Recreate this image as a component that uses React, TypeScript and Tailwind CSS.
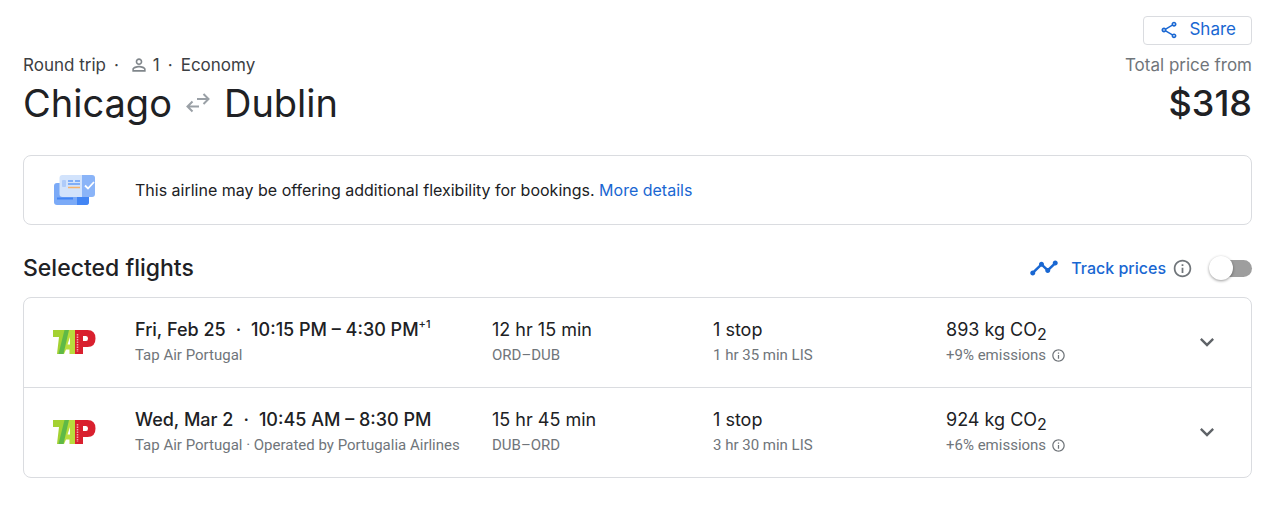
import { useId } from 'react';
import { MdExpandMore, MdInfoOutline, MdOutlineShare, MdPersonOutline, MdTimeline } from 'react-icons/md';

type Flight = {
  date: string;
  times: string;
  dayOffset?: string;
  carrier: string;
  duration: string;
  route: string;
  stops: string;
  layover: string;
  co2: string;
  emissions: string;
};

const flights: Flight[] = [
  {
    date: 'Fri, Feb 25',
    times: '10:15 PM – 4:30 PM',
    dayOffset: '+1',
    carrier: 'Tap Air Portugal',
    duration: '12 hr 15 min',
    route: 'ORD–DUB',
    stops: '1 stop',
    layover: '1 hr 35 min LIS',
    co2: '893',
    emissions: '+9% emissions',
  },
  {
    date: 'Wed, Mar 2',
    times: '10:45 AM – 8:30 PM',
    carrier: 'Tap Air Portugal · Operated by Portugalia Airlines',
    duration: '15 hr 45 min',
    route: 'DUB–ORD',
    stops: '1 stop',
    layover: '3 hr 30 min LIS',
    co2: '924',
    emissions: '+6% emissions',
  },
];

function RoundTripArrows() {
  return (
    <svg width="24" height="20" viewBox="0 0 24 20" fill="none" stroke="#9aa0a6" strokeWidth="2" role="img" aria-label="to and from">
      <path d="M11 6H22.500M17.500 1l5 5-5 5" />
      <path d="M13 13.500H1.500M6.500 8.500l-5 5 5 5" />
    </svg>
  );
}

function TicketsIcon() {
  return (
    <svg width="42" height="32" viewBox="0 0 42 32" aria-hidden="true">
      <rect x="0" y="9" width="35" height="22" rx="3" fill="#7baaf7" />
      <path d="M23 22h12v6a3 3 0 0 1-3 3h-9z" fill="#4285f4" />
      <path d="M3 24.500h16" stroke="#4285f4" strokeWidth="2" />
      <path d="M8.500 1H28v22H8.500a3 3 0 0 1-3-3V4a3 3 0 0 1 3-3z" fill="#d2e3fc" />
      <path d="M28 1h10a3 3 0 0 1 3 3v16a3 3 0 0 1-3 3H28z" fill="#8ab4f8" />
      <rect x="8" y="6" width="4" height="7" rx="1" fill="#aecbfa" />
      <path d="M14 7h5M21 7h5M14 10h12" stroke="#669df6" strokeWidth="1.500" />
      <path d="M14 13.500h12" stroke="#f6b26b" strokeWidth="1.500" />
      <path d="M31 11.500l3 3 6-6.500" fill="none" stroke="#fff" strokeWidth="1.800" />
    </svg>
  );
}

function TapLogo() {
  return (
    <svg width="44" height="26" viewBox="0 0 44 26" role="img" aria-label="TAP Air Portugal">
      <path d="M1 1h15l-5.500 24H5L7 8H1z" fill="#a4d233" />
      <path d="M14 1h9v24h-5.500v-4.500h-3.500L12 25H7z" fill="#b9dc3c" />
      <path d="M12.500 1H17l-5.500 24H6.500z" fill="#5fb946" />
      <path d="M18 8v7.500h-2.500z" fill="#fff" />
      <path d="M23 1h12.500q8 0 8 8.500t-8 8.500H31v7h-8z" fill="#d9202e" />
      <path d="M31 7h3q2 0 2 2.500T34 12h-3z" fill="#fff" />
      <path d="M25.500 5v18" stroke="#f0a9af" strokeWidth="1.500" strokeDasharray="1.500 1" />
    </svg>
  );
}

function FlightRow({ flight }: { flight: Flight }) {
  return (
    <li className="grid grid-cols-[111px_minmax(0,357fr)_minmax(0,221fr)_minmax(0,233fr)_minmax(0,305fr)] border-b border-[#dadce0] pt-[19px] pb-5 last:border-b-0">
      <div className="flex items-center pl-7">
        <TapLogo />
      </div>
      <div className="whitespace-nowrap">
        <div className="text-lg leading-[26px] font-medium">
          {flight.date}
          <span className="mx-2.5">·</span>
          {flight.times}
          {flight.dayOffset && <sup className="-top-2 text-[11px]">{flight.dayOffset}</sup>}
        </div>
        <SubText>{flight.carrier}</SubText>
      </div>
      <div>
        <div className="text-lg leading-[26px]">{flight.duration}</div>
        <SubText>{flight.route}</SubText>
      </div>
      <div>
        <div className="text-lg leading-[26px]">{flight.stops}</div>
        <SubText>{flight.layover}</SubText>
      </div>
      <div className="flex items-center justify-between pr-[30px]">
        <div>
          <div className="text-lg leading-[26px]">
            {flight.co2} kg CO<sub className="text-base">2</sub>
          </div>
          <div className="flex items-center gap-[5px]">
            <SubText>{flight.emissions}</SubText>
            <MdInfoOutline className="size-[15px] text-[#70757a]" aria-hidden="true" />
          </div>
        </div>
        <button type="button" aria-label={`Show details for ${flight.date}`} className="text-[#5f6368]">
          <MdExpandMore className="size-7" />
        </button>
      </div>
    </li>
  );
}

function SubText({ children }: { children: string }) {
  return <div className="font-[Roboto,sans-serif] text-[15px] leading-6 text-[#70757a]">{children}</div>;
}

export default function App() {
  const trackId = useId();
  return (
    <main className="bg-white pt-4 pr-[18px] pb-7 pl-[23px] font-[Inter,sans-serif] text-[#202124]">
      <header className="flex items-end justify-between">
        <div>
          <div className="flex items-center text-[17px] leading-[26px] text-[#3c4043]">
            Round trip
            <span className="mx-2">·</span>
            <MdPersonOutline className="mr-1 ml-0.5 size-5 text-[#80868b]" aria-label="Passengers" />
            1
            <span className="mx-2">·</span>
            Economy
          </div>
          <h1 className="flex items-center gap-3.5 text-[38px] leading-[50px]">
            Chicago
            <RoundTripArrows />
            Dublin
          </h1>
        </div>
        <div className="flex flex-col items-end">
          <button
            type="button"
            className="mb-[7px] flex h-[29px] items-center gap-2.5 rounded border border-[#dadce0] px-[15px] pb-0.5 text-[17px] text-[#1967d2]"
          >
            <MdOutlineShare className="size-5" aria-hidden="true" />
            Share
          </button>
          <div className="text-[17px] leading-[26px] text-[#70757a]">Total price from</div>
          <div className="text-4xl leading-[50px] font-medium">$318</div>
        </div>
      </header>

      <section className="mt-[27px] flex min-h-[70px] items-center rounded-lg border border-[#dadce0] text-base">
        <div className="w-[111px] shrink-0 pl-[30px]">
          <TicketsIcon />
        </div>
        <p>
          This airline may be offering additional flexibility for bookings.{' '}
          <a href="#details" className="text-[#1967d2]">
            More details
          </a>
        </p>
      </section>

      <section className="mt-[22px]">
        <div className="mb-2 flex h-[42px] items-center justify-between">
          <h2 className="text-[23px] font-medium">Selected flights</h2>
          <div className="flex items-center">
            <MdTimeline className="mr-3 size-[30px] text-[#1967d2]" aria-hidden="true" />
            <label htmlFor={trackId} className="text-base font-medium text-[#1967d2]">
              Track prices
            </label>
            <MdInfoOutline className="mr-4 ml-1.5 size-[21px] text-[#70757a]" aria-hidden="true" />
            <span className="relative flex h-6 w-[43px] items-center justify-end">
              <input
                id={trackId}
                type="checkbox"
                role="switch"
                className="peer h-[17px] w-9 cursor-pointer appearance-none rounded-full bg-[#9e9e9e] checked:bg-[#8ab4f8]"
              />
              <span className="pointer-events-none absolute top-0 left-0 size-6 rounded-full bg-white shadow-[0_1px_3px_rgba(0,0,0,0.4)] peer-checked:left-5 peer-checked:bg-[#1967d2]" />
            </span>
          </div>
        </div>
        <ul className="rounded-lg border border-[#dadce0]">
          {flights.map((flight) => (
            <FlightRow key={flight.date} flight={flight} />
          ))}
        </ul>
      </section>
    </main>
  );
}
